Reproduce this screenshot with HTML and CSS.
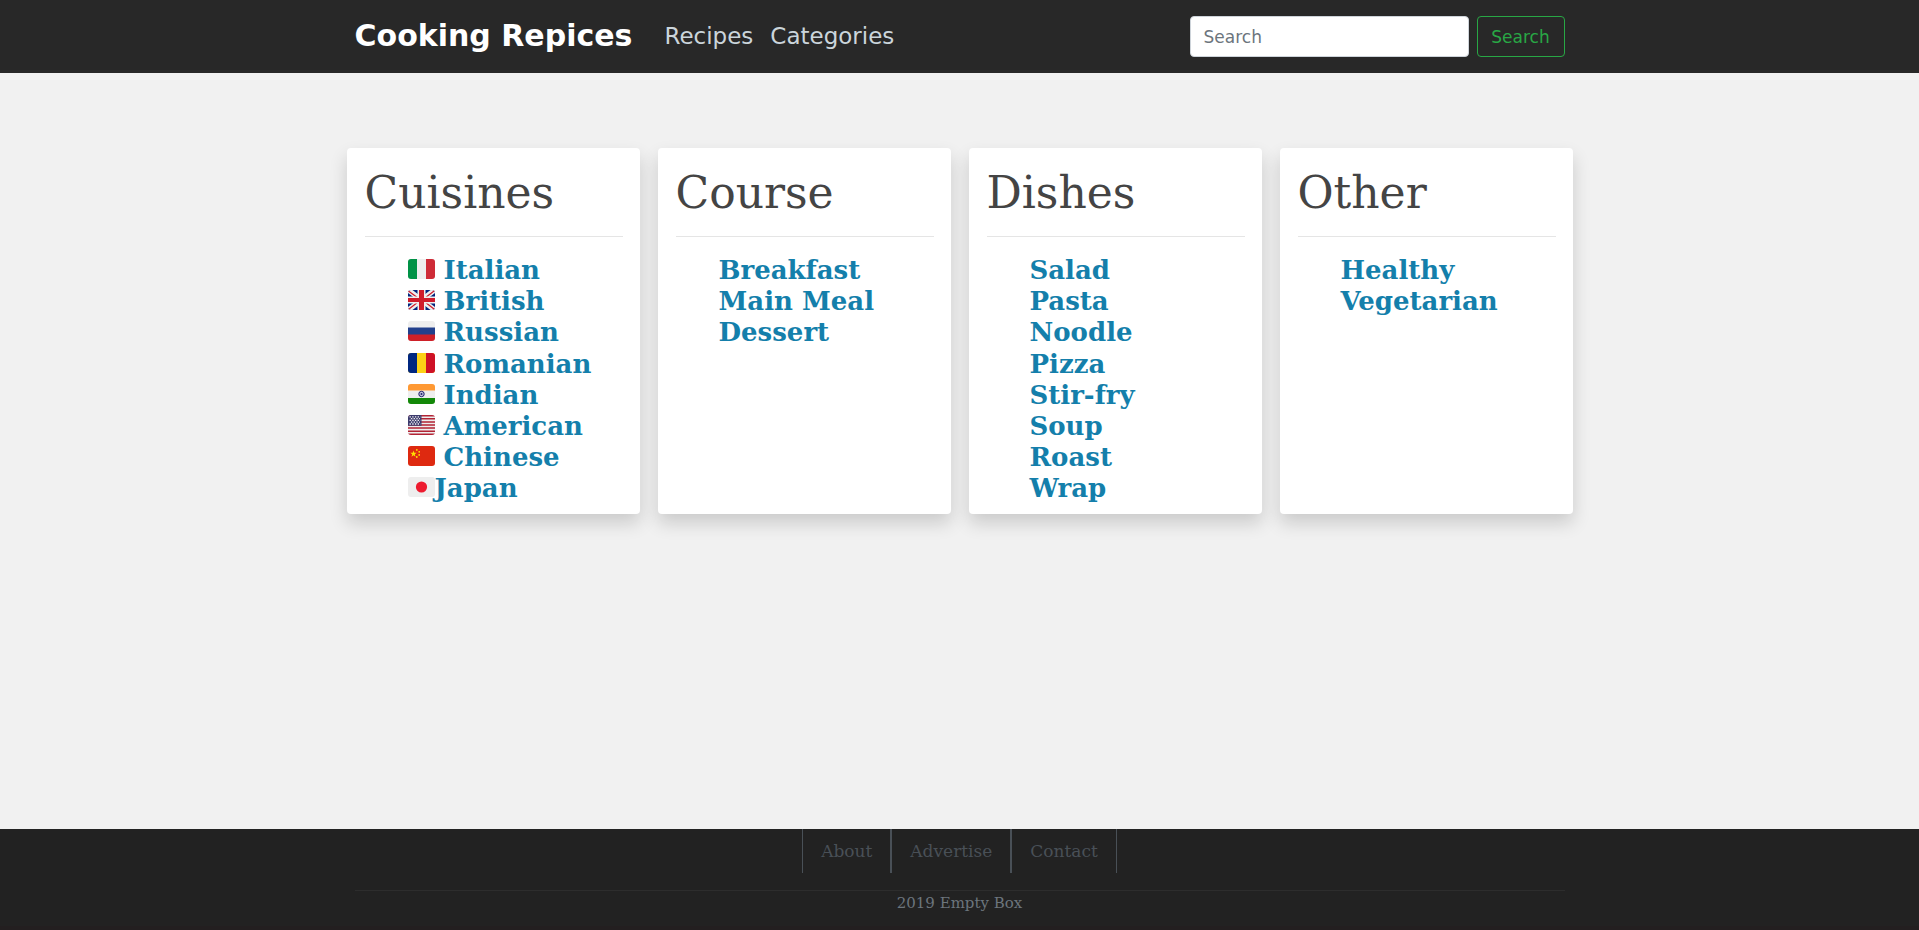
FILE: index.html
```html
<!DOCTYPE html>
<html lang="en">
<head>
<meta charset="utf-8">
<meta name="viewport" content="width=device-width, initial-scale=1">
<title>Cooking Repices</title>
<link rel="stylesheet" href="styles.css">
</head>
<body>
<header class="navbar">
  <div class="container navbar-inner">
    <a class="brand" href="#">Cooking Repices</a>
    <nav class="nav-links" aria-label="Main">
      <a href="#">Recipes</a>
      <a href="#">Categories</a>
    </nav>
    <form class="search" role="search">
      <input class="search-input" type="search" placeholder="Search" aria-label="Search">
      <button class="search-button" type="submit">Search</button>
    </form>
  </div>
</header>

<main class="categories">
  <section class="card">
    <h1>Cuisines</h1>
    <ul>
      <li><svg class="flag" viewBox="0 0 27 20" aria-hidden="true"><rect width="27" height="20" fill="#eee"/><path fill="#009246" d="M0 0h9v20H0z"/><path fill="#ce2b37" d="M18 0h9v20h-9z"/></svg><a href="#">Italian</a></li>
      <li><svg class="flag" viewBox="0 0 27 20" aria-hidden="true"><rect width="27" height="20" fill="#00247d"/><path stroke="#eee" stroke-width="5" d="M-1-1l29 22M28-1L-1 21"/><path stroke="#cf1b2b" stroke-width="1.300" d="M-1 0l11 8M17 12l11 8.500M28-.5L17 8M10 12l-11 8.500"/><path fill="#eee" d="M9.500 0h8v20h-8zM0 6.500h27v7H0z"/><path fill="#cf1b2b" d="M11 0h5v20h-5zM0 8h27v4H0z"/></svg><a href="#">British</a></li>
      <li><svg class="flag" viewBox="0 0 27 20" aria-hidden="true"><rect width="27" height="20" fill="#eee"/><path fill="#22408c" d="M0 6.500h27V14H0z"/><path fill="#ce2028" d="M0 13.500h27V20H0z"/></svg><a href="#">Russian</a></li>
      <li><svg class="flag" viewBox="0 0 27 20" aria-hidden="true"><rect width="27" height="20" fill="#fcd116"/><path fill="#002780" d="M0 0h9v20H0z"/><path fill="#ce1126" d="M18 0h9v20h-9z"/></svg><a href="#">Romanian</a></li>
      <li><svg class="flag" viewBox="0 0 27 20" aria-hidden="true"><rect width="27" height="20" fill="#eee"/><path fill="#ff9933" d="M0 0h27v6.500H0z"/><path fill="#138808" d="M0 14h27v6H0z"/><circle cx="13.500" cy="10" r="2.700" fill="#c5c5df" stroke="#20206c" stroke-width="1"/><circle cx="13.500" cy="10" r="1" fill="#20206c"/></svg><a href="#">Indian</a></li>
      <li><svg class="flag" viewBox="0 0 27 20" aria-hidden="true"><rect width="27" height="20" fill="#eee"/><path stroke="#b22334" stroke-width="1.540" d="M0 .77h27M0 3.850h27M0 6.930h27M0 10h27M0 13.080h27M0 16.160h27M0 19.230h27"/><path fill="#3c3b6e" d="M0 0h13.500v10.800H0z"/><path stroke="#eee" stroke-width="1.300" stroke-dasharray="1.400 1.300" d="M1.500 1.800h11M2.900 3.600h9M1.500 5.400h11M2.900 7.200h9M1.500 9h11"/></svg><a href="#">American</a></li>
      <li><svg class="flag" viewBox="0 0 27 20" aria-hidden="true"><rect width="27" height="20" fill="#de2910"/><path fill="#ffde02" d="M5.500 4.500l.8 2.300h2.400L6.800 8.300l.7 2.400-2-1.400-2 1.400.7-2.400-1.900-1.500h2.400z"/><g fill="#ffde02"><circle cx="8.800" cy="3.900" r=".9"/><circle cx="11.200" cy="5.800" r=".9"/><circle cx="11.200" cy="8.900" r=".9"/><circle cx="8.800" cy="11" r=".9"/></g></svg><a href="#">Chinese</a></li>
      <li><svg class="flag flag-tight" viewBox="0 0 27 20" aria-hidden="true"><rect width="27" height="20" fill="#eee"/><circle cx="13.500" cy="10" r="5.600" fill="#ed1b2f"/></svg><a href="#">Japan</a></li>
    </ul>
  </section>
  <section class="card">
    <h1>Course</h1>
    <ul>
      <li><a href="#">Breakfast</a></li>
      <li><a href="#">Main Meal</a></li>
      <li><a href="#">Dessert</a></li>
    </ul>
  </section>
  <section class="card">
    <h1>Dishes</h1>
    <ul>
      <li><a href="#">Salad</a></li>
      <li><a href="#">Pasta</a></li>
      <li><a href="#">Noodle</a></li>
      <li><a href="#">Pizza</a></li>
      <li><a href="#">Stir-fry</a></li>
      <li><a href="#">Soup</a></li>
      <li><a href="#">Roast</a></li>
      <li><a href="#">Wrap</a></li>
    </ul>
  </section>
  <section class="card">
    <h1>Other</h1>
    <ul>
      <li><a href="#">Healthy</a></li>
      <li><a href="#">Vegetarian</a></li>
    </ul>
  </section>
</main>

<footer class="footer">
  <div class="container">
    <nav class="footer-links" aria-label="Footer">
      <a href="#">About</a>
      <a href="#">Advertise</a>
      <a href="#">Contact</a>
    </nav>
    <p class="copyright">2019 Empty Box</p>
  </div>
</footer>
</body>
</html>
```
FILE: styles.css
```css
*,
*::before,
*::after {
  box-sizing: border-box;
}

body {
  display: flex;
  flex-direction: column;
  min-height: 100vh;
  margin: 0;
  background: #f1f1f1;
  color: #444;
  font-family: "DejaVu Serif", serif;
  font-size: 17px;
}

a {
  text-decoration: none;
}

.container {
  width: 100%;
  max-width: 1210px;
  margin: 0 auto;
}

.navbar {
  padding: 16px;
  background: #282828;
  font-family: "DejaVu Sans", sans-serif;
}

.navbar-inner {
  display: flex;
  align-items: center;
}

.brand {
  margin-right: 32px;
  padding-bottom: 2px;
  color: #fff;
  font-size: 30px;
  font-weight: 700;
  line-height: 38px;
}

.nav-links {
  display: flex;
  gap: 17px;
  padding-bottom: 2px;
}

.nav-links a {
  color: #cbd5db;
  font-size: 23px;
}

.search {
  display: flex;
  gap: 8px;
  margin-left: auto;
}

.search-input,
.search-button {
  height: 41px;
  padding: 0 13px;
  border: 1px solid #ced4da;
  border-radius: 4px;
  font: inherit;
}

.search-input {
  width: 279px;
  background: #fff;
  color: #495057;
}

.search-input::placeholder {
  color: #6c757d;
}

.search-button {
  width: 88px;
  border-color: #28a745;
  background: transparent;
  color: #28a745;
}

.categories {
  display: grid;
  grid-template-columns: repeat(4, 1fr);
  gap: 18px;
  width: 100%;
  max-width: 1226px;
  margin: 75px auto;
}

.card {
  padding: 18px 17px 9px 18px;
  border-radius: 4px;
  background: #fff;
  box-shadow: 0 9px 18px rgba(0, 0, 0, 0.16);
}

.card h1 {
  margin: 0 0 18px;
  padding-bottom: 17px;
  border-bottom: 1px solid #e5e5e5;
  font-size: 44px;
  font-weight: 400;
  line-height: 53px;
}

.card ul {
  margin: 0;
  padding: 0 0 0 43px;
  list-style: none;
}

.card li {
  display: flex;
  align-items: center;
  font-size: 26px;
  font-weight: 700;
  line-height: 1.2;
}

.card a {
  color: #147fab;
}

.flag {
  width: 27px;
  height: 20px;
  margin: 0 9px 3px 0;
  border-radius: 3px;
}

.flag-tight {
  margin-right: 0;
}

.footer {
  margin-top: auto;
  padding-bottom: 11px;
  border-bottom: 4px solid #231f20;
  background: #222;
}

.footer-links {
  display: flex;
  justify-content: center;
  padding-bottom: 17px;
  border-bottom: 1px solid #2d2d2d;
}

.footer-links a {
  padding: 0 18px;
  border: solid #495057;
  border-width: 0 1px;
  color: #495057;
  line-height: 44px;
}

.copyright {
  margin: 0;
  color: #6c757d;
  font-size: 15px;
  line-height: 24px;
  text-align: center;
}
```
